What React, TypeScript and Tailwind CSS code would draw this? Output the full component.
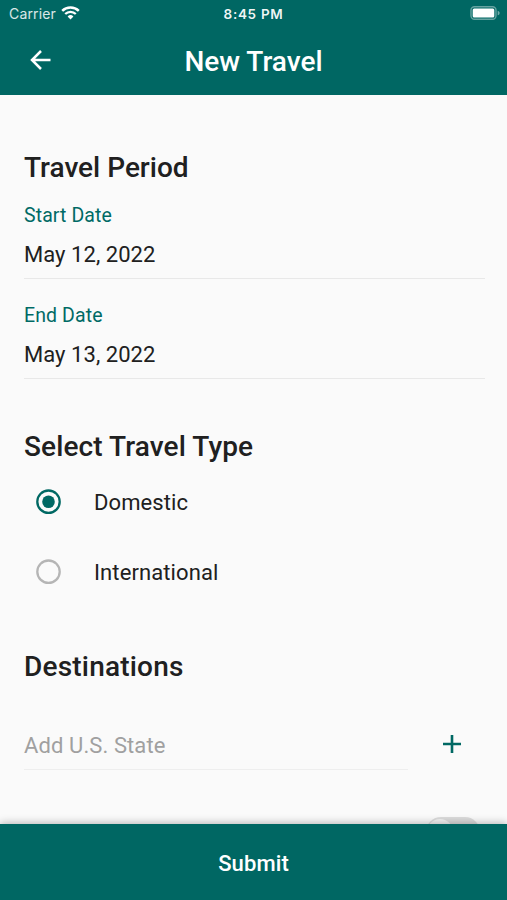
function StatusBar() {
  return (
    <div className="flex h-7 items-center justify-between pl-[9px] pr-[6px] font-['Inter']">
      <div className="flex w-[100px] items-center gap-[5px]">
        <span className="text-[14px] leading-7 tracking-[0.15px] text-white/85">Carrier</span>
        <svg width="19" height="14" viewBox="0 0 19 14" fill="none" stroke="white" className="-mt-[2px]">
          <path d="M1.2 4.9a11.8 11.8 0 0 1 16.6 0" strokeWidth="2.5" />
          <path d="M4.2 8a7.5 7.5 0 0 1 10.6 0" strokeWidth="2.3" />
          <path d="M9.5 13.5 6.6 10.5a4.1 4.1 0 0 1 5.8 0Z" fill="white" stroke="none" />
        </svg>
      </div>
      <span className="mr-[3px] text-[13.5px] font-semibold leading-7 tracking-[0.7px] text-white/95">
        8:45 PM
      </span>
      <div className="flex w-[100px] justify-end">
        <svg width="31" height="14" viewBox="0 0 31 14" className="-mt-[2px]">
          <rect x="1" y="0.7" width="25" height="12.6" rx="3.5" fill="none" stroke="white" strokeOpacity="0.4" strokeWidth="1.4" />
          <rect x="2.7" y="2.4" width="21.6" height="9.2" rx="1.5" fill="white" />
          <path d="M27.7 4.7c2.6.8 2.6 3.8 0 4.6z" fill="white" fillOpacity="0.45" />
        </svg>
      </div>
    </div>
  );
}

function DateField({ label, value }: { label: string; value: string }) {
  return (
    <div className="h-[100px]">
      <div className="text-[19.5px] leading-6 tracking-[0.1px] text-[#006a65]">{label}</div>
      <div className="mt-[11px] h-[40px] border-b border-[#e8e8e8] text-[22px] leading-[32px] tracking-[0.05px]">
        {value}
      </div>
    </div>
  );
}

function RadioOption({ label, checked }: { label: string; checked?: boolean }) {
  return (
    <div className="flex h-[70px] items-center">
      <svg width="26" height="26" viewBox="0 0 26 26" className="ml-[11px]">
        <circle
          cx="13.5"
          cy="12.7"
          r="11.2"
          fill="none"
          strokeWidth="2.3"
          className={checked ? "stroke-[#006863]" : "stroke-[#b5b5b5]"}
        />
        {checked && <circle cx="13.5" cy="12.7" r="6.3" fill="#006863" />}
      </svg>
      <span className="ml-[33px] mt-[2px] text-[22px] leading-8 tracking-[0.1px]">{label}</span>
    </div>
  );
}

export default function App() {
  return (
    <div className="flex h-[900px] w-full flex-col overflow-hidden bg-[#fafafa] font-['Roboto',sans-serif] text-[#202020]">
      <header className="h-[95px] shrink-0 bg-[#006763]">
        <StatusBar />
        <div className="flex h-[67px] items-center justify-between px-[30px]">
          <svg width="21" height="20" viewBox="0 0 21 20" fill="none" stroke="white" strokeWidth="2.5" className="mb-[4px]">
            <path d="M20.5 10H2.5M11 1 2 10l9 9" />
          </svg>
          <h1 className="text-[28px] font-medium leading-8 text-white">New Travel</h1>
          <div className="w-[21px]" />
        </div>
      </header>

      <main className="min-h-0 flex-1 overflow-hidden pl-6 pr-[22px]">
        <h2 className="mt-[53px] text-[28px] font-medium leading-10">Travel Period</h2>
        <div className="mt-4">
          <DateField label="Start Date" value="May 12, 2022" />
          <DateField label="End Date" value="May 13, 2022" />
        </div>

        <h2 className="mt-[23px] text-[28px] font-medium leading-10 tracking-[0.1px]">Select Travel Type</h2>
        <RadioOption label="Domestic" checked />
        <RadioOption label="International" />

        <h2 className="mt-[40px] text-[28px] font-medium leading-10 tracking-[0.2px]">Destinations</h2>
        <div className="mt-[43px] flex">
          <div className="h-[40px] w-[384px] border-b border-[#eeeeee] text-[22px] leading-[32px] tracking-[0.1px] text-[#a0a0a0]">
            Add U.S. State
          </div>
          <svg width="18" height="18" viewBox="0 0 18 18" stroke="#006863" strokeWidth="2.6" className="ml-[35px] mt-[5px]">
            <path d="M9 0v18M0 9h18" />
          </svg>
        </div>
        <div className="ml-[402px] mt-[47px] h-[30px] w-[54px] rounded-full bg-[#dcdcdc] pl-[1px] pt-[2px]">
          <div className="size-[26px] rounded-full bg-[#f4f4f4]" />
        </div>
      </main>

      <footer className="relative flex h-[76px] shrink-0 items-center justify-center bg-[#006763] pt-[4px] shadow-[0_-1px_8px_rgba(0,0,0,0.28)]">
        <span className="text-[22px] font-medium leading-8 tracking-[0.1px] text-white">Submit</span>
      </footer>
    </div>
  );
}
